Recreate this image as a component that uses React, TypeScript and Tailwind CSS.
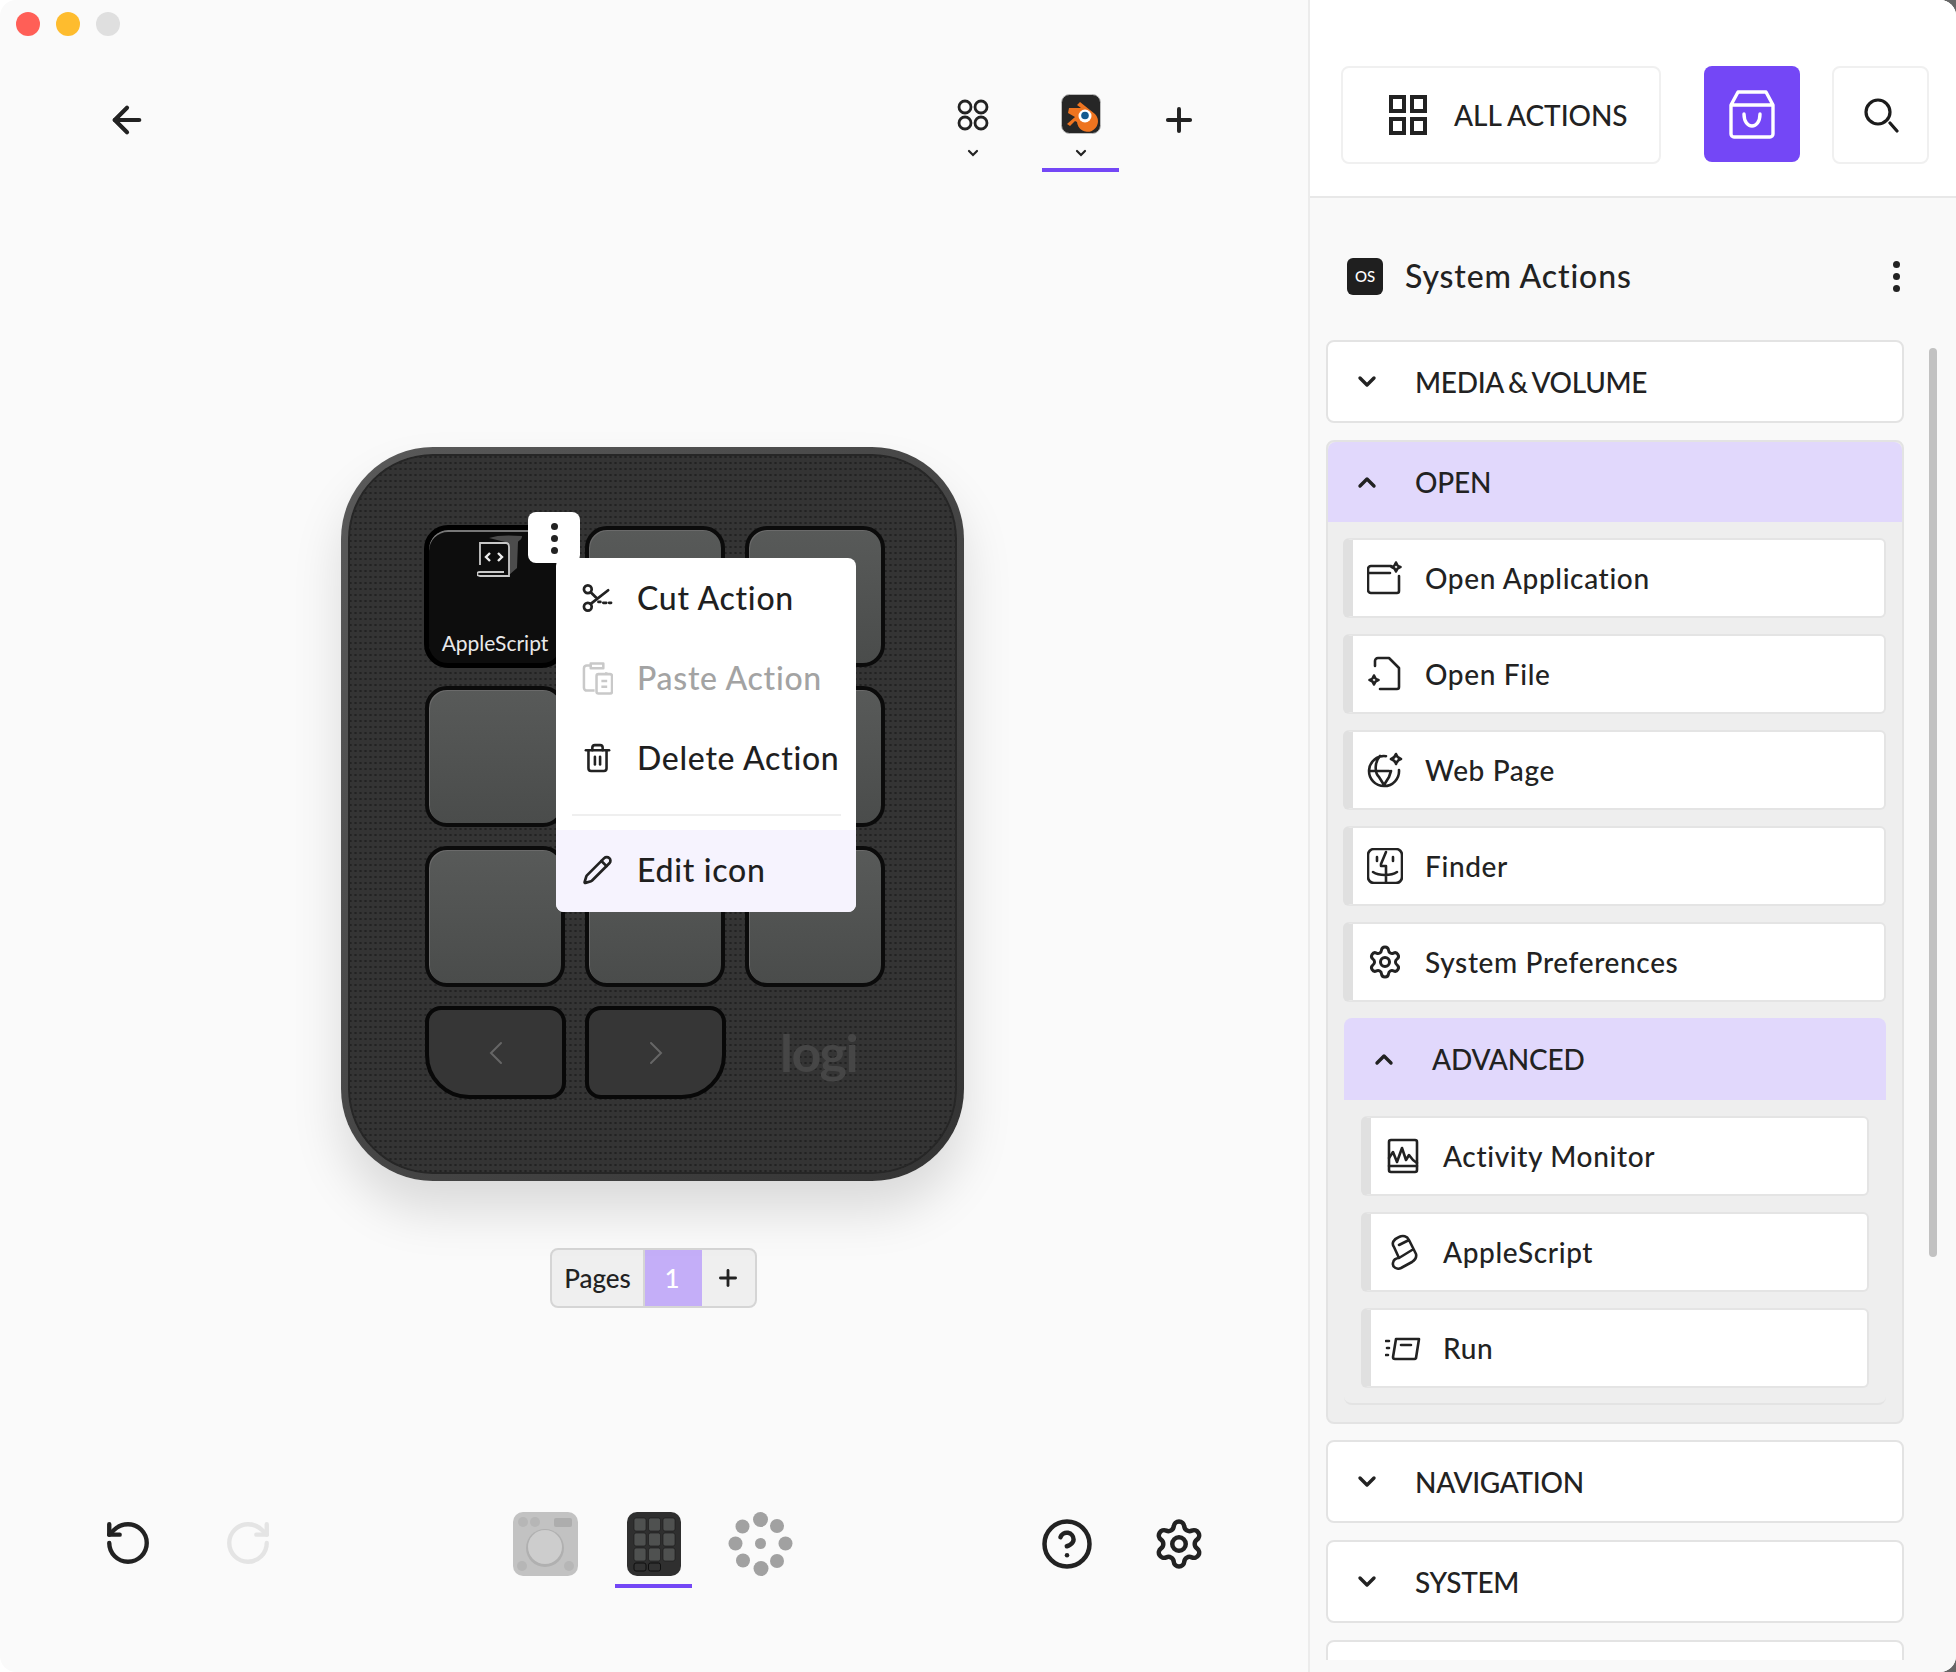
import { ArrowLeft, Plus, RotateCcw, RotateCw, CircleHelp, Settings, Trash2, Pencil } from "lucide-react";
import type { ReactNode } from "react";

const ink = "#222222";

function Chevron({ up = false }: { up?: boolean }) {
  return (
    <svg width="20" height="14" viewBox="0 0 20 14" fill="none" stroke={ink} strokeWidth="3.4" strokeLinecap="round" strokeLinejoin="round">
      <path d={up ? "M3 11l7-7 7 7" : "M3 3l7 7 7-7"} />
    </svg>
  );
}

function Sparkle({ x, y, r = 4.5 }: { x: number; y: number; r?: number }) {
  return <path d={`M${x} ${y - r}c.6 2.6 1.8 3.9 ${r} ${r}c-2.6.6-3.9 1.8-${r} ${r}c-.6-2.6-1.8-3.9-${r}-${r}c2.6-.6 3.9-1.8 ${r}-${r}z`} />;
}

function ItemIcon({ children }: { children: ReactNode }) {
  return (
    <svg width="36" height="36" viewBox="0 0 36 36" fill="none" stroke={ink} strokeWidth="2.6" strokeLinecap="round" strokeLinejoin="round" className="shrink-0">
      {children}
    </svg>
  );
}

const openApp = (
  <ItemIcon>
    <path d="M24 6H4a3 3 0 0 0-3 3v21a3 3 0 0 0 3 3h26a2 2 0 0 0 2-2V16M1 13h22" />
    <Sparkle x={29} y={7} />
  </ItemIcon>
);
const openFile = (
  <ItemIcon>
    <path d="M8 10V5a3 3 0 0 1 3-3h11l10 10v19a2 2 0 0 1-2 2H13" />
    <Sparkle x={7} y={24} />
  </ItemIcon>
);
const webPage = (
  <ItemIcon>
    <path d="M19 4.200A15 15 0 1 0 32 18M2 19h20M13 4c-5 5-6 16-1 21l5 8 5-8 2-6" />
    <Sparkle x={29} y={7} r={5} />
  </ItemIcon>
);
const finder = (
  <ItemIcon>
    <rect x="1" y="1" width="34" height="34" rx="6" />
    <path d="M19 4l-5 12v2h5v16M10 9v4M26 9v4M6 24c6 4 18 4 24 0" />
  </ItemIcon>
);
const gear = <Settings size={36} strokeWidth={2} color={ink} className="shrink-0" />;
const activity = (
  <ItemIcon>
    <rect x="4" y="2" width="28" height="32" rx="2" />
    <path d="M4 20l4-6 4 10 5-14 4 12 3-5 4 5 4 3M4 28h28" />
  </ItemIcon>
);
const scroll = (
  <ItemIcon>
    <path d="M9 13c-3-4 0-8 5-10 4-2 8-1 10 3l7 14c1 4-1 6-4 8l-11 6c-4 2-9-1-8-5 0-3 3-5 6-5zM14 24l13-8M14 11l10-5" />
  </ItemIcon>
);
const run = (
  <ItemIcon>
    <path d="M11 9h23l-3 19a2 2 0 0 1-2 1H10a2 2 0 0 1-2-2zM16 15h10M1 11h3M2 18h2M1 25h2" />
  </ItemIcon>
);

function Item({ icon, label }: { icon: ReactNode; label: string }) {
  return (
    <div className="flex h-20 items-center gap-[22px] rounded-md border-2 border-l-[10px] border-[#e4e4e4] border-l-[#e0e0e0] bg-white pl-[14px]">
      {icon}
      <span className="text-[28px] font-medium tracking-[0.65px] text-[#222]">{label}</span>
    </div>
  );
}

function Closed({ label }: { label: string }) {
  return (
    <div className="flex h-[83px] shrink-0 items-center gap-[38px] rounded-lg border-2 border-[#e3e3e3] bg-white pl-[29px]">
      <Chevron />
      <span className="text-[28px] font-medium tracking-[-0.3px] text-[#222] [word-spacing:-2px]">{label}</span>
    </div>
  );
}

function OpenHeader({ label, nested = false }: { label: string; nested?: boolean }) {
  return (
    <div className={`flex items-center gap-[38px] rounded-t-lg bg-[#e1d8fc] ${nested ? "h-[82px] pl-[30px]" : "h-20 pl-[29px]"}`}>
      <Chevron up />
      <span className="text-[28px] font-medium tracking-[-0.15px] text-[#222]">{label}</span>
    </div>
  );
}

function Blender() {
  return (
    <svg width="40" height="40" viewBox="0 0 40 40">
      <rect x="0.500" y="0.500" width="39" height="39" rx="8" fill="#262626" stroke="#bdbdbd" strokeWidth="1" />
      <path d="M8 14h12l-4-3 3-3 15 12a10.500 10.500 0 1 1-18 8l-2-1-5 5-3-2 8-7-7-4z" fill="#ee7420" />
      <circle cx="24" cy="22" r="6.500" fill="#fff" />
      <circle cx="24" cy="21.500" r="3.800" fill="#155a8f" />
    </svg>
  );
}

function Key() {
  return <div className="h-[141px] w-[140px] rounded-[22px] border-[4px] border-[#0b0b0b] bg-gradient-to-b from-[#585a59] to-[#4a4c4b] shadow-[inset_1px_1px_0_#6a6a6a]" />;
}

function NavKey({ side }: { side: "left" | "right" }) {
  const left = side === "left";
  return (
    <div className={`flex h-[93px] w-[141px] items-center justify-center border-[4px] border-[#080808] bg-[#363636] ${left ? "rounded-[16px] rounded-bl-[44px]" : "rounded-[16px] rounded-br-[44px]"}`}>
      <svg width="14" height="24" viewBox="0 0 14 24" fill="none" stroke="#666" strokeWidth="2" strokeLinecap="round">
        <path d={left ? "M12 2L2 12l10 10" : "M2 2l10 10L2 22"} />
      </svg>
    </div>
  );
}

function Menu({ icon, label, muted = false }: { icon: ReactNode; label: string; muted?: boolean }) {
  return (
    <div className="flex h-20 items-center gap-[24px] pl-[26px]">
      <span className="flex w-[31px] justify-center">{icon}</span>
      <span className={`text-[32px] font-medium tracking-[0.72px] ${muted ? "text-[#a3a3a3]" : "text-[#1f1f1f]"}`}>{label}</span>
    </div>
  );
}

function Device() {
  return (
    <div className="relative ml-[341px] h-[734px] w-[623px] rounded-[92px] bg-gradient-to-br from-[#5a5a5a] to-[#333333] p-[7px] shadow-[0_30px_50px_rgba(0,0,0,0.13)]">
      <div className="h-full rounded-[85px] bg-[#343434] bg-[radial-gradient(circle,#222222_1px,transparent_1.3px)] bg-[size:5px_6px] pl-[77px] pt-[72px] shadow-[inset_0_0_0_2px_#262626]">
        <div className="grid w-[460px] grid-cols-3 gap-x-5 gap-y-[19px]">
          <div className="-m-px flex h-[143px] w-[142px] flex-col items-center justify-between rounded-[24px] border-[5px] border-black bg-[#0d0d0d] pb-[8px] shadow-[inset_0_2px_0_#777]">
            <svg width="46" height="46" viewBox="0 0 46 46" fill="none" stroke="#c8c8c8" strokeWidth="1.8" className="ml-[9px] mt-[3px]">
              <path d="M12 5c8-3 20-3 33-2 0 4-3 4-4 6l-1 26-8 7V10z" fill="#4c4c4c" stroke="none" />
              <path d="M3 32V10h26c3 0 3 2 3 4v29H3c-4 0-4-4 0-4h24" />
              <path d="M13 20l-4 4 4 4M21 20l4 4-4 4" strokeWidth="2.4" stroke="#eee" />
            </svg>
            <span className="text-[21px] leading-6 text-[#e8e8e8]">AppleScript</span>
          </div>
          {Array.from({ length: 8 }, (_, i) => (
            <Key key={i} />
          ))}
        </div>
        <div className="mt-[19px] flex items-start gap-[19px]">
          <NavKey side="left" />
          <NavKey side="right" />
          <span className="ml-[35px] mt-[20px] text-[52px] leading-none font-bold tracking-[-1.5px] text-[#464646]">logi</span>
        </div>
      </div>

      {/* kebab on the selected key */}
      <div className="absolute left-[187px] top-[65px] flex h-[51px] w-[52px] flex-col items-center gap-[5px] rounded-lg bg-white pt-[11px]">
        <span className="h-[7px] w-[7px] rounded-full bg-[#222]" />
        <span className="h-[7px] w-[7px] rounded-full bg-[#222]" />
        <span className="h-[7px] w-[7px] rounded-full bg-[#222]" />
      </div>

      <div className="absolute left-[215px] top-[111px] w-[300px] overflow-hidden rounded-lg bg-white">
        <Menu
          label="Cut Action"
          icon={
            <svg width="32" height="32" viewBox="0 0 32 32" fill="none" stroke={ink} strokeWidth="2.8" strokeLinecap="round">
              <circle cx="6" cy="7" r="4" />
              <circle cx="6" cy="25" r="4" />
              <path d="M9 10l6 6M9 22l18-14M17 20h2M22 21h3M28 21h2" />
            </svg>
          }
        />
        <Menu
          muted
          label="Paste Action"
          icon={
            <svg width="32" height="36" viewBox="0 0 32 36" fill="none" stroke="#c9c9c9" strokeWidth="2.6" strokeLinejoin="round">
              <path d="M9 5H5a3 3 0 0 0-3 3v20a3 3 0 0 0 3 3h8M23 5h-1M9 3h13v5H9zM25 12v2" />
              <rect x="15" y="14" width="16" height="20" rx="2" />
              <path d="M20 21h6M20 27h6" />
            </svg>
          }
        />
        <Menu label="Delete Action" icon={<Trash2 size={36} strokeWidth={2} color={ink} />} />
        <div className="ml-4 mr-[15px] mt-4 h-[2px] bg-[#efefef]" />
        <div className="mt-[14px] bg-[#f6f3fe] pb-[2px]">
          <Menu label="Edit icon" icon={<Pencil size={32} strokeWidth={2.1} color={ink} />} />
        </div>
      </div>
    </div>
  );
}

function Thumbs() {
  return (
    <div className="ml-[240px] flex items-start">
      <svg width="65" height="64" viewBox="0 0 65 64">
        <rect width="65" height="64" rx="10" fill="#c2c2c2" />
        <circle cx="10" cy="10" r="5" fill="#b6b6b6" />
        <circle cx="22" cy="10" r="5" fill="#b6b6b6" />
        <rect x="41" y="6" width="18" height="9" rx="2" fill="#adadad" />
        <circle cx="32" cy="36" r="19" fill="#b0b0b0" />
        <circle cx="32" cy="35" r="17" fill="#cdcdcd" />
        <circle cx="9" cy="54" r="5" fill="#b6b6b6" />
        <circle cx="56" cy="54" r="5" fill="#b6b6b6" />
      </svg>
      <div className="ml-[37px] flex w-[77px] flex-col items-center">
        <svg width="54" height="64" viewBox="0 0 54 64">
          <rect width="54" height="64" rx="10" fill="#2f2f2f" />
          {[0, 1, 2].flatMap((r) =>
            [0, 1, 2].map((c) => <rect key={`${r}${c}`} x={7 + c * 14.500} y={6 + r * 15} width="12" height="13" rx="2" fill="#4f5150" stroke="#191919" strokeWidth="0.6" />)
          )}
          <rect x="7" y="51" width="12" height="8" rx="2" fill="#333" stroke="#0f0f0f" />
          <rect x="21.500" y="51" width="12" height="8" rx="2" fill="#333" stroke="#0f0f0f" />
        </svg>
        <div className="mt-2 h-1 w-[77px] bg-[#7447f6]" />
      </div>
      <svg width="65" height="64" viewBox="0 0 65 64" fill="#a1a1a1" className="ml-[36px]">
        <circle cx="32.500" cy="7.500" r="7.500" />
        <circle cx="49" cy="14" r="7" />
        <circle cx="57.500" cy="31.500" r="7" />
        <circle cx="49" cy="49" r="7" />
        <circle cx="33" cy="56.500" r="7.500" />
        <circle cx="15" cy="48.500" r="7" />
        <circle cx="7.500" cy="31.500" r="7" />
        <circle cx="14.500" cy="14.500" r="7" />
        <circle cx="32.500" cy="31.500" r="5.500" />
      </svg>
    </div>
  );
}

export default function App() {
  return (
    <div className="h-[1672px] w-[1956px] overflow-hidden bg-[linear-gradient(135deg,#ffffff_50%,#666666_50%)]">
      <div className="flex h-full overflow-hidden rounded-[16px] bg-[#fafafa] text-[#222] [font-family:Lato,sans-serif]">
        {/* left canvas */}
        <div className="w-[1308px] shrink-0">
          <div className="flex gap-4 pl-4 pt-3">
            <span className="h-6 w-6 rounded-full bg-[#ff5f57]" />
            <span className="h-6 w-6 rounded-full bg-[#febc2e]" />
            <span className="h-6 w-6 rounded-full bg-[#dfdfdf]" />
          </div>

          <div className="mt-[58px] flex h-[78px] items-start pl-[106px]">
            <ArrowLeft size={42} strokeWidth={2.4} color={ink} className="mt-[5px]" />
            <div className="ml-[786px] flex h-[78px] w-[77px] flex-col items-center pt-[5px]">
              <svg width="32" height="32" viewBox="0 0 32 32" fill="none" stroke={ink} strokeWidth="2.8">
                <circle cx="8" cy="8" r="6" />
                <circle cx="24" cy="8" r="6" />
                <circle cx="8" cy="24" r="6" />
                <circle cx="24" cy="24" r="6" />
              </svg>
              <svg width="12" height="8" viewBox="0 0 12 8" fill="none" stroke={ink} strokeWidth="2.2" strokeLinecap="round" className="mt-[18px]">
                <path d="M2 2l4 4 4-4" />
              </svg>
            </div>
            <div className="ml-[31px] flex h-[78px] w-[77px] flex-col items-center border-b-4 border-[#7447f6]">
              <Blender />
              <svg width="12" height="8" viewBox="0 0 12 8" fill="none" stroke={ink} strokeWidth="2.2" strokeLinecap="round" className="mt-[15px]">
                <path d="M2 2l4 4 4-4" />
              </svg>
            </div>
            <Plus size={38} strokeWidth={2.5} color={ink} className="ml-[41px] mt-[7px]" />
          </div>

          <div className="mt-[275px]">
            <Device />
          </div>

          <div className="ml-[550px] mt-[67px] flex h-[60px] w-[207px] overflow-hidden rounded-lg border-2 border-[#d5d5d5] bg-[#efefef]">
            <span className="flex w-[93px] items-center justify-center border-r-2 border-[#d5d5d5] text-[26px] font-medium text-[#222]">Pages</span>
            <span className="flex w-[57px] items-center justify-center bg-[#c4aef8] pr-[3px] text-[26px] font-medium text-white">1</span>
            <span className="flex flex-1 items-center justify-center pr-[2px]">
              <Plus size={26} strokeWidth={2.6} color={ink} />
            </span>
          </div>

          <div className="mt-[204px] flex h-[76px] items-start">
            <RotateCcw size={50} strokeWidth={2.1} color={ink} className="ml-[103px] mt-[6px]" />
            <RotateCw size={50} strokeWidth={2.1} color="#e4e4e4" className="ml-[70px] mt-[6px]" />
            <Thumbs />
            <CircleHelp size={54} strokeWidth={2} color={ink} className="ml-[247px] mt-[5px]" />
            <Settings size={54} strokeWidth={2} color={ink} className="ml-[58px] mt-[5px]" />
          </div>
        </div>

        {/* right actions panel */}
        <div className="relative flex h-full flex-1 flex-col border-l-2 border-[#ececec] bg-[#f9f9f9]">
          <div className="flex h-[198px] shrink-0 items-start border-b-2 border-[#e8e8e8] bg-white pl-[31px] pt-[66px]">
            <div className="flex h-[98px] w-[320px] items-center rounded-lg border-2 border-[#f0f0f0] pl-[46px]">
              <svg width="38" height="40" viewBox="0 0 38 40" fill="none" stroke={ink} strokeWidth="4">
                <rect x="2" y="2" width="13" height="14" />
                <rect x="23" y="2" width="13" height="14" />
                <rect x="2" y="24" width="13" height="14" />
                <rect x="23" y="24" width="13" height="14" />
              </svg>
              <span className="ml-[27px] text-[28px] font-medium tracking-[-0.05px] text-[#222]">ALL ACTIONS</span>
            </div>
            <div className="ml-[43px] flex h-[96px] w-[96px] items-center justify-center rounded-lg bg-[#7447f6]">
              <svg width="46" height="50" viewBox="0 0 46 50" fill="none" stroke="#fff" strokeWidth="3.4" strokeLinecap="round" strokeLinejoin="round">
                <path d="M9 3h28l7 13v29a3 3 0 0 1-3 3H5a3 3 0 0 1-3-3V16zM2 16h42M15 25c0 16 16 16 16 0" />
              </svg>
            </div>
            <div className="ml-[32px] flex h-[98px] w-[97px] items-center justify-center rounded-lg border-2 border-[#f0f0f0]">
              <svg width="36" height="36" viewBox="0 0 36 36" fill="none" stroke="#1c1c1c" strokeWidth="3.200" strokeLinecap="round">
                <circle cx="15" cy="15" r="12" />
                <path d="M27 26l7 8" />
              </svg>
            </div>
          </div>

          <div className="flex items-center pl-[37px] pr-[56px] pt-[60px]">
            <span className="flex h-[37px] w-[36px] shrink-0 items-center justify-center rounded-md bg-[#1f1f1f] text-[15px] font-medium text-white">OS</span>
            <span className="-mt-[2px] ml-[22px] whitespace-nowrap text-[32px] font-medium leading-[37px] tracking-[0.85px] text-[#222]">System Actions</span>
            <div className="ml-auto flex shrink-0 flex-col gap-[5px]">
              <span className="h-[7px] w-[7px] rounded-full bg-[#222]" />
              <span className="h-[7px] w-[7px] rounded-full bg-[#222]" />
              <span className="h-[7px] w-[7px] rounded-full bg-[#222]" />
            </div>
          </div>

          <div className="ml-[16px] mt-[45px] flex h-[1320px] w-[578px] flex-col gap-[17px] overflow-hidden">
            <Closed label="MEDIA & VOLUME" />
            <div className="-mb-px shrink-0 rounded-lg border-2 border-[#e3e3e3] bg-[#eeeeee] pb-[17px]">
              <OpenHeader label="OPEN" />
              <div className="flex flex-col gap-4 pl-[15px] pr-4 pt-4">
                <Item icon={openApp} label="Open Application" />
                <Item icon={openFile} label="Open File" />
                <Item icon={webPage} label="Web Page" />
                <Item icon={finder} label="Finder" />
                <Item icon={gear} label="System Preferences" />
                <div className="ml-px rounded-lg border-b-2 border-[#e3e3e3] pb-[15px]">
                  <OpenHeader nested label="ADVANCED" />
                  <div className="flex flex-col gap-4 px-[17px] pt-4">
                    <Item icon={activity} label="Activity Monitor" />
                    <Item icon={scroll} label="AppleScript" />
                    <Item icon={run} label="Run" />
                  </div>
                </div>
              </div>
            </div>
            <Closed label="NAVIGATION" />
            <Closed label="SYSTEM" />
            <Closed label="" />
          </div>

          <div className="absolute left-[619px] top-[348px] h-[909px] w-2 rounded-full bg-[#c2c2c2]" />
        </div>
      </div>
    </div>
  );
}
